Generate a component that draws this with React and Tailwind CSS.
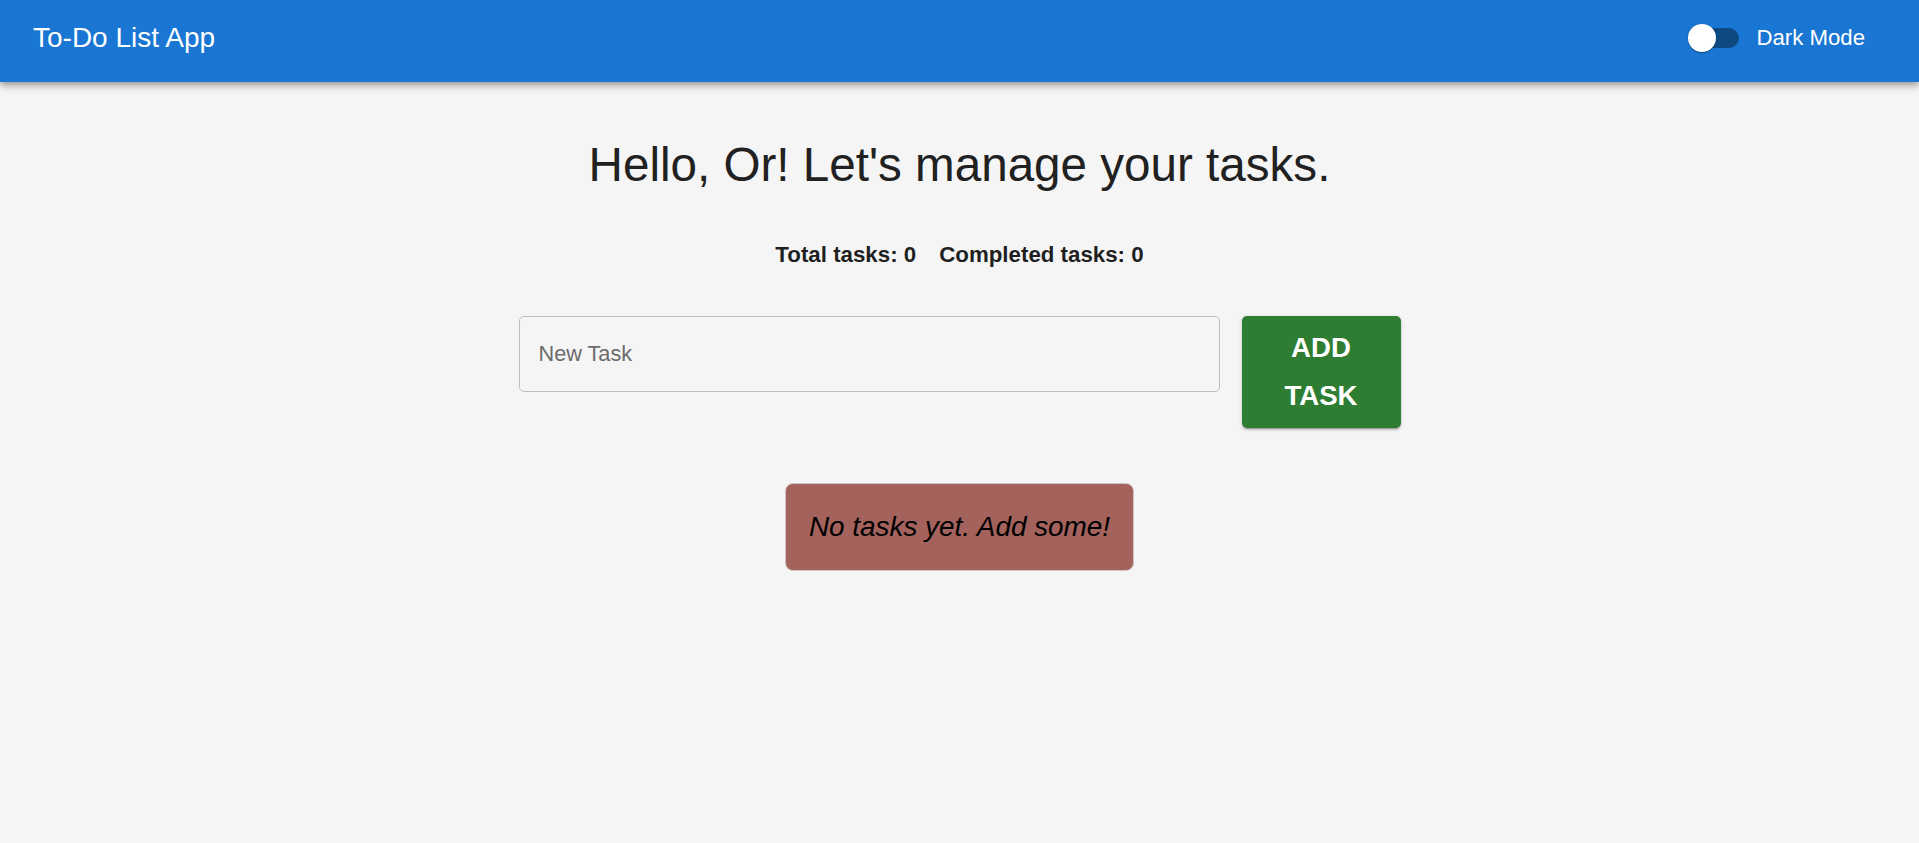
import { useState } from 'react';

const font = { fontFamily: '"Liberation Sans", Arial, Helvetica, sans-serif' };

const DarkModeSwitch = ({ checked, onChange }) => (
  <button
    type="button"
    role="switch"
    aria-checked={checked}
    onClick={() => onChange(!checked)}
    className="relative flex h-[28px] w-[51px] items-center"
  >
    <span className="ml-[8px] h-[20px] w-[43px] rounded-full bg-[#0f4982]" />
    <span className="absolute left-0 top-0 h-[28px] w-[28px] rounded-full bg-white shadow-[0_2px_1px_-1px_rgba(0,0,0,0.2),0_1px_1px_0_rgba(0,0,0,0.14),0_1px_3px_0_rgba(0,0,0,0.12)]" />
  </button>
);

const App = () => {
  const [dark, setDark] = useState(false);
  const [task, setTask] = useState('');
  const [tasks, setTasks] = useState([]);

  const addTask = () => {
    if (!task.trim()) return;
    setTasks([...tasks, { text: task.trim(), done: false }]);
    setTask('');
  };

  const completed = tasks.filter((t) => t.done).length;

  return (
    <div className="min-h-screen bg-[#f5f5f5] text-[#212121]" style={font}>
      <header className="h-[82px] bg-[#1976d2] text-white shadow-[0_3px_5px_-1px_rgba(0,0,0,0.2),0_5px_7px_0_rgba(0,0,0,0.14),0_1px_13px_0_rgba(0,0,0,0.12)]">
        <div className="flex h-[76px] items-center justify-between pl-[33px] pr-[54px]">
          <h1 className="text-[28px] leading-[32px]">To-Do List App</h1>
          <div className="flex items-center gap-[17px]">
            <DarkModeSwitch checked={dark} onChange={setDark} />
            <span className="text-[22.2px] leading-[26px]">Dark Mode</span>
          </div>
        </div>
      </header>

      <main className="flex flex-col items-center">
        <h2 className="mt-[55px] text-[47.6px] leading-[56px] text-[#212121]">
          Hello, Or! Let's manage your tasks.
        </h2>

        <div className="mt-[49px] flex gap-[23px] text-[22.3px] font-bold leading-[26px] text-[#1f1f1f]">
          <span>Total tasks: {tasks.length}</span>
          <span>Completed tasks: {completed}</span>
        </div>

        <div className="mt-[48px] flex items-start gap-[22px]">
          <input
            value={task}
            onChange={(e) => setTask(e.target.value)}
            onKeyDown={(e) => e.key === 'Enter' && addTask()}
            placeholder="New Task"
            className="h-[76px] w-[701px] rounded-[5px] border border-[#bdbdbd] bg-transparent px-[19px] text-[21.7px] text-[#212121] outline-none placeholder:text-[#6b6b6b]"
          />
          <button
            onClick={addTask}
            className="flex h-[112px] w-[159px] flex-col items-center justify-center rounded-[5px] bg-[#2e7d32] text-[27.6px] font-bold uppercase leading-[48px] text-white shadow-[0_3px_1px_-2px_rgba(0,0,0,0.2),0_2px_2px_0_rgba(0,0,0,0.14),0_1px_5px_0_rgba(0,0,0,0.12)]"
          >
            <span>Add</span>
            <span>Task</span>
          </button>
        </div>

        {tasks.length === 0 ? (
          <div className="mt-[55px] flex h-[88px] items-center rounded-[8px] border border-[#d0c4c3] bg-[#a4625d] px-[23px]">
            <p className="text-[27.9px] italic leading-[32px] text-black">No tasks yet. Add some!</p>
          </div>
        ) : (
          <ul className="mt-[55px] flex w-[883px] flex-col gap-3">
            {tasks.map((t, i) => (
              <li key={i} className="rounded-[5px] bg-white px-5 py-4 text-[21.7px] shadow">
                {t.text}
              </li>
            ))}
          </ul>
        )}
      </main>
    </div>
  );
};

export default App;
